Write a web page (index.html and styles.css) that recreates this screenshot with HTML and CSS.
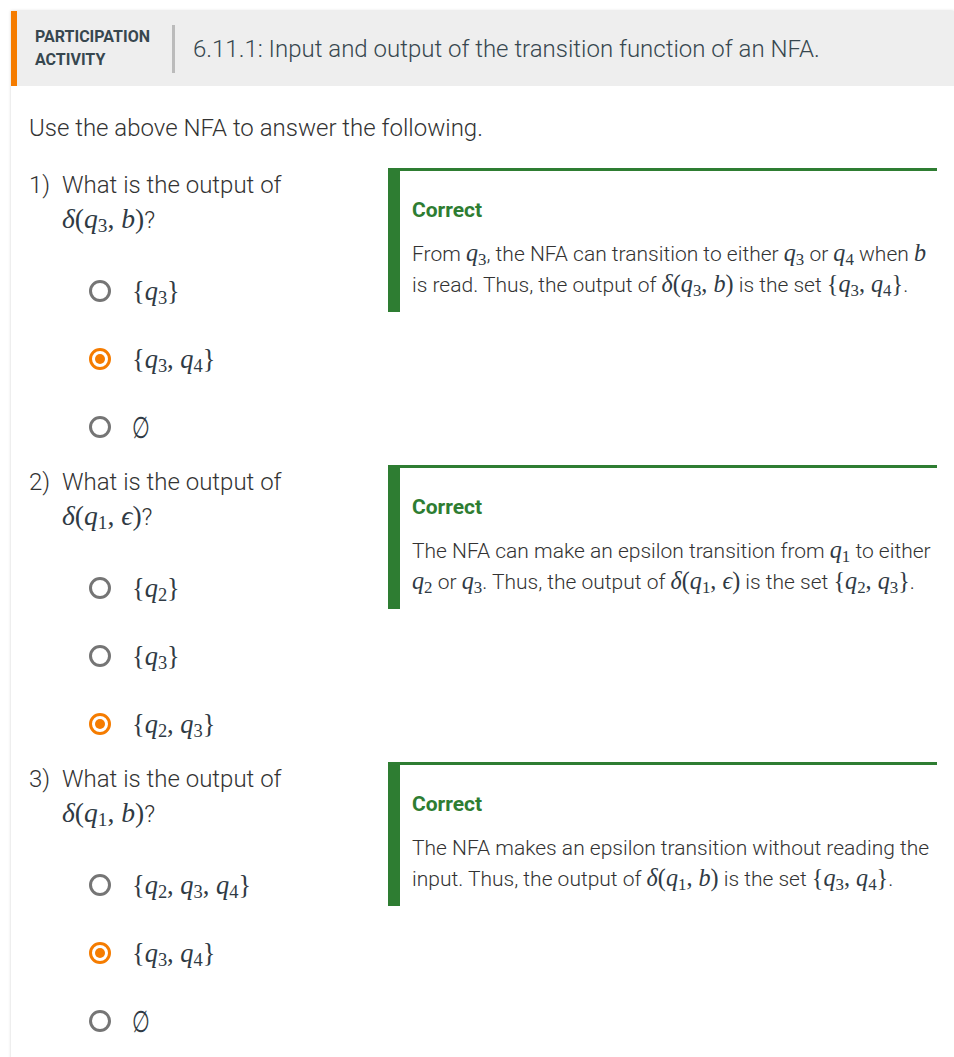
FILE: index.html
```html
<!DOCTYPE html>
<html>
<head>
<meta charset="utf-8">
<link rel="stylesheet" href="styles.css">
</head>
<body>
<div class="card">
  <div class="header">
    <div class="label">PARTICIPATION<br>ACTIVITY</div>
    <div class="sep"></div>
    <div class="title">6.11.1: Input and output of the transition function of an NFA.</div>
  </div>
  <div class="content">
    <p class="intro">Use the above NFA to answer the following.</p>

    <div class="q">
      <div class="qcol">
        <div class="qhead">
          <span class="qnum">1)</span>
          <span class="qtext">What is the output of <span class="m"><i>δ</i>(<i>q</i><sub>3</sub>, <i>b</i>)</span>?</span>
        </div>
        <div class="opts">
          <div class="opt"><span class="radio"></span><span class="m">{<i>q</i><sub>3</sub>}</span></div>
          <div class="opt"><span class="radio on"></span><span class="m">{<i>q</i><sub>3</sub>, <i>q</i><sub>4</sub>}</span></div>
          <div class="opt"><span class="radio"></span><span class="m"><span class="empty">∅</span></span></div>
        </div>
      </div>
      <div class="fb">
        <div class="ok">Correct</div>
        <div class="expl">From <span class="m"><i>q</i><sub>3</sub></span>, the NFA can transition to either <span class="m"><i>q</i><sub>3</sub></span> or <span class="m"><i>q</i><sub>4</sub></span> when <span class="m"><i>b</i></span> is read. Thus, the output of <span class="m"><i>δ</i>(<i>q</i><sub>3</sub>, <i>b</i>)</span> is the set <span class="m">{<i>q</i><sub>3</sub>, <i>q</i><sub>4</sub>}</span>.</div>
      </div>
    </div>

    <div class="q">
      <div class="qcol">
        <div class="qhead">
          <span class="qnum">2)</span>
          <span class="qtext">What is the output of <span class="m"><i>δ</i>(<i>q</i><sub>1</sub>, <i>ϵ</i>)</span>?</span>
        </div>
        <div class="opts">
          <div class="opt"><span class="radio"></span><span class="m">{<i>q</i><sub>2</sub>}</span></div>
          <div class="opt"><span class="radio"></span><span class="m">{<i>q</i><sub>3</sub>}</span></div>
          <div class="opt"><span class="radio on"></span><span class="m">{<i>q</i><sub>2</sub>, <i>q</i><sub>3</sub>}</span></div>
        </div>
      </div>
      <div class="fb">
        <div class="ok">Correct</div>
        <div class="expl">The NFA can make an epsilon transition from <span class="m"><i>q</i><sub>1</sub></span> to either <span class="m"><i>q</i><sub>2</sub></span> or <span class="m"><i>q</i><sub>3</sub></span>. Thus, the output of <span class="m"><i>δ</i>(<i>q</i><sub>1</sub>, <i>ϵ</i>)</span> is the set <span class="m">{<i>q</i><sub>2</sub>, <i>q</i><sub>3</sub>}</span>.</div>
      </div>
    </div>

    <div class="q">
      <div class="qcol">
        <div class="qhead">
          <span class="qnum">3)</span>
          <span class="qtext">What is the output of <span class="m"><i>δ</i>(<i>q</i><sub>1</sub>, <i>b</i>)</span>?</span>
        </div>
        <div class="opts">
          <div class="opt"><span class="radio"></span><span class="m">{<i>q</i><sub>2</sub>, <i>q</i><sub>3</sub>, <i>q</i><sub>4</sub>}</span></div>
          <div class="opt"><span class="radio on"></span><span class="m">{<i>q</i><sub>3</sub>, <i>q</i><sub>4</sub>}</span></div>
          <div class="opt"><span class="radio"></span><span class="m"><span class="empty">∅</span></span></div>
        </div>
      </div>
      <div class="fb">
        <div class="ok">Correct</div>
        <div class="expl">The NFA makes an epsilon transition without reading the input. Thus, the output of <span class="m"><i>δ</i>(<i>q</i><sub>1</sub>, <i>b</i>)</span> is the set <span class="m">{<i>q</i><sub>3</sub>, <i>q</i><sub>4</sub>}</span>.</div>
      </div>
    </div>
  </div>
</div>
</body>
</html>
```

FILE: styles.css
```css
html, body {
  margin: 0;
  padding: 0;
  background: #ffffff;
}
body {
  font-family: Roboto, "Liberation Sans", sans-serif;
  color: #333333;
}
.card {
  margin: 11px 0 0 11px;
  box-shadow: 0 0 3px rgba(0, 0, 0, 0.18);
  min-height: 1100px;
}
.header {
  height: 75px;
  background: #eeeeee;
  border-left: 6px solid #f57c00;
  display: flex;
  align-items: center;
}
.label {
  margin-left: 18px;
  font-weight: 700;
  font-size: 16px;
  line-height: 22.5px;
  color: #37474f;
  width: 137px;
}
.sep {
  width: 3px;
  height: 48px;
  background: #bbbbbb;
}
.title {
  margin-left: 18px;
  font-weight: 300;
  font-size: 24px;
  color: #37474f;
}
.content {
  padding: 0 17px 0 18px;
}
.intro {
  margin: 25px 0 0 0;
  font-size: 24px;
  font-weight: 300;
  line-height: 34px;
}
.q {
  display: flex;
  gap: 29px;
  margin-top: 23px;
}
.q + .q {
  margin-top: 4px;
}
.qcol {
  width: 330px;
  flex: none;
}
.qhead {
  display: flex;
  font-size: 24px;
  font-weight: 300;
  line-height: 34px;
}
.qnum {
  width: 33px;
  flex: none;
}
.qtext {
  width: 280px;
}
.m {
  font-family: "Liberation Serif", "DejaVu Serif", serif;
  font-size: 1.2em;
  font-weight: 400;
  color: #2f3a44;
  white-space: nowrap;
}
.qhead .m {
  font-size: 1.15em;
}
.m i {
  font-style: italic;
}
.m sub {
  font-size: 0.7em;
  vertical-align: -0.22em;
  line-height: 0;
  font-style: normal;
}
.empty {
  display: inline-block;
  font-family: "DejaVu Serif", serif;
  font-size: 1.15em;
  transform: scaleX(0.68);
  transform-origin: left center;
}
.opts {
  margin-top: 20px;
  padding-left: 60px;
}
.opt {
  height: 68px;
  display: flex;
  align-items: center;
  font-size: 22px;
}
.radio {
  width: 16px;
  height: 16px;
  border: 3px solid #757575;
  border-radius: 50%;
  margin-right: 21px;
  flex: none;
  box-sizing: content-box;
  display: flex;
  align-items: center;
  justify-content: center;
}
.radio.on {
  border-color: #f57c00;
}
.radio.on::after {
  content: "";
  width: 10px;
  height: 10px;
  border-radius: 50%;
  background: #f57c00;
}
.fb {
  width: 549px;
  height: 144px;
  box-sizing: border-box;
  border-top: 3px solid #2e7d32;
  border-left: 12px solid #2e7d32;
  padding: 27px 4px 0 12px;
}
.ok {
  font-size: 21px;
  font-weight: 700;
  color: #2e7d32;
  line-height: 24px;
}
.expl {
  margin-top: 17px;
  font-size: 21px;
  font-weight: 300;
  line-height: 31px;
}
.expl .m {
  font-size: 1.15em;
  line-height: 20px;
}
```
